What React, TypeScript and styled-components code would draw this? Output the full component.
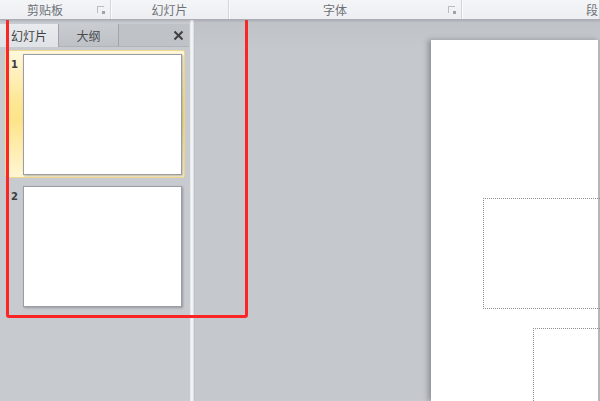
import React from 'react'
import styled, { createGlobalStyle } from 'styled-components'

const GlobalStyle = createGlobalStyle`
  html, body {
    margin: 0;
    padding: 0;
    overflow: hidden;
  }
  body {
    font-family: "Noto Sans CJK SC", "Noto Sans", sans-serif;
  }
`

const Window = styled.div`
  position: relative;
  width: 600px;
  height: 401px;
  display: flex;
  flex-direction: column;
  background: #c5c8cc;
  overflow: hidden;
`

const Ribbon = styled.div`
  height: 19px;
  flex: none;
  display: flex;
  background: linear-gradient(#f4f5f7, #eceef1);
  border-bottom: 1px solid #a9aeb4;
  box-shadow: 0 1px 2px rgba(120, 125, 135, 0.35);
  z-index: 1;
`

const Group = styled.div<{ $width: number; $align?: string }>`
  position: relative;
  width: ${({ $width }) => $width}px;
  flex: none;
  display: flex;
  align-items: center;
  justify-content: ${({ $align = 'center' }) => $align};
  border-right: 1px solid #d3d6da;
  box-shadow: 1px 0 0 #fbfbfc;
  font-size: 12px;
  line-height: 1;
  color: #6e7177;
  padding-top: 1px;
  box-sizing: border-box;
`

const GroupLabel = styled.span<{ $shift?: number }>`
  transform: translateX(${({ $shift = 0 }) => $shift}px);
`

const Launcher = styled.span`
  position: absolute;
  right: 6px;
  top: 6px;
  width: 6px;
  height: 6px;
  border-top: 1px solid #b9bcc1;
  border-left: 1px solid #b9bcc1;
  &::after {
    content: '';
    position: absolute;
    right: -1px;
    bottom: -1px;
    width: 3px;
    height: 3px;
    background: #9ea2a8;
  }
`

const Body = styled.div`
  flex: 1;
  display: flex;
  min-height: 0;
`

const SidePanel = styled.div`
  width: 189px;
  flex: none;
  display: flex;
  flex-direction: column;
  padding-top: 4px;
  background: #c7cace;
`

const TabBar = styled.div`
  height: 22px;
  display: flex;
  background: #bfc3c8;
  border-bottom: 1px solid #b1b5bb;
`

const Tab = styled.div<{ $active?: boolean; $width: number }>`
  width: ${({ $width }) => $width}px;
  display: flex;
  align-items: center;
  justify-content: center;
  font-size: 12px;
  color: ${({ $active }) => ($active ? '#3d3f43' : '#4a4c50')};
  background: ${({ $active }) =>
    $active ? 'linear-gradient(#e9ebee, #dfe2e6)' : 'linear-gradient(#c9ccd1, #bec2c7)'};
  border-right: 1px solid #9fa4aa;
  box-sizing: border-box;
  margin-bottom: ${({ $active }) => ($active ? '-1px' : '0')};
`

const TabFill = styled.div`
  flex: 1;
  display: flex;
  align-items: center;
  justify-content: flex-end;
  padding-right: 5px;
`

const SlideList = styled.div`
  display: flex;
  flex-direction: column;
  gap: 4px;
  padding: 3px 4px 0 5px;
`

const SlideItem = styled.div<{ $selected?: boolean }>`
  display: flex;
  gap: 5px;
  height: 128px;
  padding: 3px 2px 0 5px;
  box-sizing: border-box;
  border: 1px solid ${({ $selected }) => ($selected ? '#f1d88f' : 'transparent')};
  border-radius: 2px;
  background: ${({ $selected }) =>
    $selected
      ? 'linear-gradient(#fff8dc 0%, #fde795 40%, #fde48a 55%, #fff6d4 100%)'
      : 'transparent'};
`

const SlideNumber = styled.span`
  width: 7px;
  padding-top: 5px;
  font-family: "DejaVu Sans", sans-serif;
  font-size: 10px;
  font-weight: bold;
  color: #3b3d40;
`

const Thumb = styled.div`
  width: 158px;
  height: 119px;
  background: #fff;
  border: 1px solid #9a9ea4;
  box-shadow: 1px 1px 2px rgba(90, 95, 100, 0.45);
`

const Splitter = styled.div`
  width: 6px;
  flex: none;
  background: linear-gradient(90deg, #b9bdc2 0, #f6f7f8 2px, #eef0f2 4px, #aeb2b8 6px);
`

const Main = styled.div`
  flex: 1;
  display: flex;
  padding: 20px 0 0 236px;
  background: linear-gradient(#bfc2c7, #c5c8cc 30px);
`

const Slide = styled.div`
  position: relative;
  flex: 1;
  background: #fff;
  box-shadow: -3px 0 5px rgba(90, 95, 105, 0.5);
  border-right: 2px solid #b3b7bc;
`

const Placeholder = styled.div<{ $left: number; $top: number; $height?: number }>`
  position: absolute;
  left: ${({ $left }) => $left}px;
  top: ${({ $top }) => $top}px;
  right: -4px;
  height: ${({ $height }) => ($height ? `${$height}px` : 'auto')};
  bottom: ${({ $height }) => ($height ? 'auto' : '-4px')};
  border: 1px dotted #8c8f94;
`

const Marker = styled.div`
  position: absolute;
  left: 6px;
  top: 13px;
  width: 236px;
  height: 299px;
  border: 3px solid #fb2525;
  border-radius: 3px;
  pointer-events: none;
`

function CloseIcon() {
  return (
    <svg width='11' height='11' viewBox='0 0 11 11'>
      <path d='M1.5 1.5 L9.5 9.5 M9.5 1.5 L1.5 9.5' stroke='#3e4044' strokeWidth='2' />
    </svg>
  )
}

export default function App(): JSX.Element {
  return (
    <>
      <GlobalStyle />
      <Window>
        <Ribbon>
          <Group $width={111}>
            <GroupLabel $shift={-10}>剪贴板</GroupLabel>
            <Launcher />
          </Group>
          <Group $width={118}>
            <GroupLabel>幻灯片</GroupLabel>
          </Group>
          <Group $width={233}>
            <GroupLabel $shift={-10}>字体</GroupLabel>
            <Launcher />
          </Group>
          <Group $width={138} $align='flex-end'>
            <GroupLabel $shift={-1}>段</GroupLabel>
          </Group>
        </Ribbon>
        <Body>
          <SidePanel>
            <TabBar>
              <Tab $active $width={59}>幻灯片</Tab>
              <Tab $width={60}>大纲</Tab>
              <TabFill>
                <CloseIcon />
              </TabFill>
            </TabBar>
            <SlideList>
              <SlideItem $selected>
                <SlideNumber>1</SlideNumber>
                <Thumb />
              </SlideItem>
              <SlideItem>
                <SlideNumber>2</SlideNumber>
                <Thumb />
              </SlideItem>
            </SlideList>
          </SidePanel>
          <Splitter />
          <Main>
            <Slide>
              <Placeholder $left={52} $top={158} $height={109} />
              <Placeholder $left={102} $top={288} />
            </Slide>
          </Main>
        </Body>
        <Marker />
      </Window>
    </>
  )
}
